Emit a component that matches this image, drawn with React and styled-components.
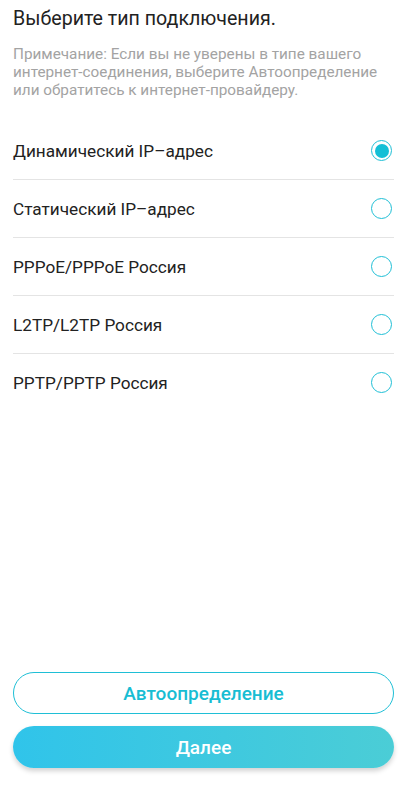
import { useState } from "react";
import styled, { createGlobalStyle } from "styled-components";

const GlobalStyle = createGlobalStyle`
  html, body {
    margin: 0;
    padding: 0;
    background: #fff;
  }
  body {
    font-family: Roboto, "Noto Sans", sans-serif;
    -webkit-font-smoothing: antialiased;
  }
`;

const Page = styled.div`
  box-sizing: border-box;
  min-height: 786px;
  display: flex;
  flex-direction: column;
  padding: 6px 16px 18px 13px;
`;

const Title = styled.h1`
  margin: 0;
  font-size: 19.6px;
  line-height: 26px;
  font-weight: 400;
  color: #222;
`;

const Note = styled.p`
  margin: 13px 0 0;
  font-size: 15.3px;
  line-height: 18px;
  color: #a3a3a3;
`;

const List = styled.div`
  margin-top: 23px;
  display: flex;
  flex-direction: column;
`;

const Row = styled.label`
  display: flex;
  align-items: center;
  justify-content: space-between;
  height: 57px;
  border-bottom: 1px solid ${(p) => (p.$last ? "transparent" : "#e4e4e4")};
  cursor: pointer;
`;

const RowText = styled.span`
  font-size: 17.2px;
  color: #222;
`;

const Radio = styled.span`
  box-sizing: border-box;
  width: 21px;
  height: 21px;
  margin-right: 2px;
  border-radius: 50%;
  border: 1.5px solid #1fbfd6;
  display: flex;
  align-items: center;
  justify-content: center;

  &::after {
    content: "";
    width: 14px;
    height: 14px;
    border-radius: 50%;
    background: #14bfd6;
    display: ${(p) => (p.$checked ? "block" : "none")};
  }
`;

const Spacer = styled.div`
  flex: 1;
`;

const Buttons = styled.div`
  display: flex;
  flex-direction: column;
  gap: 12px;
`;

const Button = styled.button`
  box-sizing: border-box;
  height: 42px;
  border-radius: 21px;
  font-family: Roboto, sans-serif;
  font-size: 19px;
  font-weight: 500;
  cursor: pointer;
  border: ${(p) => (p.$primary ? "none" : "1.5px solid #1fbfd6")};
  color: ${(p) => (p.$primary ? "#fff" : "#18bdd3")};
  background: ${(p) =>
    p.$primary ? "linear-gradient(90deg, #30c4ea 0%, #4bcdd6 100%)" : "#fff"};
  box-shadow: ${(p) => (p.$primary ? "0 3px 5px rgba(0,0,0,0.18)" : "none")};
`;

const options = [
  "Динамический IP–адрес",
  "Статический IP–адрес",
  "PPPoE/PPPoE Россия",
  "L2TP/L2TP Россия",
  "PPTP/PPTP Россия",
];

export default function App() {
  const [selected, setSelected] = useState(0);

  return (
    <>
      <GlobalStyle />
      <Page>
        <Title>Выберите тип подключения.</Title>
        <Note>
          Примечание: Если вы не уверены в типе вашего интернет-соединения,
          выберите Автоопределение или обратитесь к интернет-провайдеру.
        </Note>
        <List>
          {options.map((o, i) => (
            <Row
              key={o}
              $last={i === options.length - 1}
              onClick={() => setSelected(i)}
            >
              <RowText>{o}</RowText>
              <Radio $checked={selected === i} />
            </Row>
          ))}
        </List>
        <Spacer />
        <Buttons>
          <Button>Автоопределение</Button>
          <Button $primary>Далее</Button>
        </Buttons>
      </Page>
    </>
  );
}
